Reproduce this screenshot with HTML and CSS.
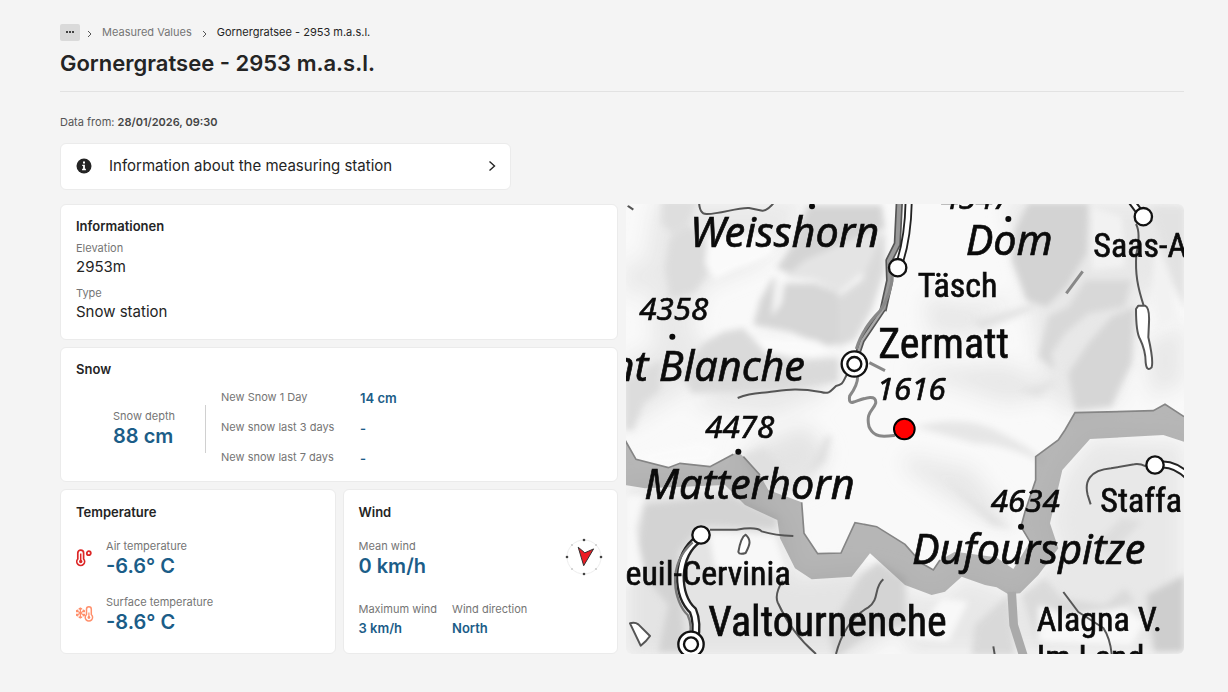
FILE: index.html
```html
<!DOCTYPE html>
<html lang="en">
<head>
<meta charset="utf-8">
<meta name="viewport" content="width=device-width, initial-scale=1">
<title>Gornergratsee - 2953 m.a.s.l.</title>
<link rel="stylesheet" href="styles.css">
</head>
<body>
<main class="page">
  <header class="page-header">
    <nav class="breadcrumb" aria-label="Breadcrumb">
      <button class="crumb-more" type="button" aria-label="Show more levels">
        <svg width="10" height="4" viewBox="0 0 10 4"><g fill="#444"><rect x="1" y="1" width="2" height="2"/><rect x="4" y="1" width="2" height="2"/><rect x="7" y="1" width="2" height="2"/></g></svg>
      </button>
      <svg class="crumb-sep" width="5" height="8" viewBox="0 0 5 8"><path d="M1 1l3 3-3 3" fill="none" stroke="#555"/></svg>
      <a class="crumb" href="#">Measured Values</a>
      <svg class="crumb-sep" width="5" height="8" viewBox="0 0 5 8"><path d="M1 1l3 3-3 3" fill="none" stroke="#555"/></svg>
      <span class="crumb current" aria-current="page">Gornergratsee - 2953 m.a.s.l.</span>
    </nav>
    <h1 class="page-title">Gornergratsee - 2953 m.a.s.l.</h1>
  </header>

  <p class="data-from">Data from: <strong>28/01/2026, 09:30</strong></p>

  <button class="info-button" type="button">
    <svg width="16" height="16" viewBox="0 0 16 16"><circle cx="8" cy="8" r="7.5" fill="#242424"/><path d="M7 3.600h2v2H7zM6.200 6.800h2.700v4h1v1.400H6.100v-1.400h1V8.100h-.9z" fill="#fff"/></svg>
    <span class="info-label">Information about the measuring station</span>
    <svg width="8" height="12" viewBox="0 0 8 12"><path d="M1.500 1.500L6.500 6l-5 4.500" fill="none" stroke="#242424" stroke-width="1.400"/></svg>
  </button>

  <div class="layout">
    <div class="cards">
      <section class="card card-info">
        <h2 class="card-title">Informationen</h2>
        <dl class="facts">
          <dt class="label">Elevation</dt><dd class="fact">2953m</dd>
          <dt class="label">Type</dt><dd class="fact">Snow station</dd>
        </dl>
      </section>

      <section class="card card-snow">
        <h2 class="card-title">Snow</h2>
        <div class="snow">
          <div class="snow-depth">
            <span class="label">Snow depth</span>
            <span class="value-lg">88 cm</span>
          </div>
          <dl class="snow-new">
            <dt class="label">New Snow 1 Day</dt><dd class="value">14 cm</dd>
            <dt class="label">New snow last 3 days</dt><dd class="value">-</dd>
            <dt class="label">New snow last 7 days</dt><dd class="value">-</dd>
          </dl>
        </div>
      </section>

      <section class="card card-small">
        <h2 class="card-title">Temperature</h2>
        <div class="reading">
          <svg width="18" height="18" viewBox="0 0 18 18" fill="none" stroke="#dc2626"><path d="M1.800 4a2.900 2.900 0 0 1 5.800 0v6a3.900 3.900 0 1 1-5.800 0z" stroke-width="1.700"/><path d="M4.700 4.500v7" stroke-width="1.500"/><circle cx="4.700" cy="12.500" r="1.700" fill="#dc2626" stroke="none"/><circle cx="12.800" cy="4.200" r="2" stroke-width="1.800"/></svg>
          <div class="stack"><span class="label">Air temperature</span><span class="value-lg">-6.6° C</span></div>
        </div>
        <div class="reading">
          <svg width="18" height="18" viewBox="0 0 18 18" fill="none" stroke="#ff8f6b"><path d="M10.500 4.200a2.400 2.400 0 0 1 4.800 0v5.300a3.700 3.700 0 1 1-4.800 0z" stroke-width="1.500"/><path d="M12.900 7.500v5" stroke-width="1.200"/><circle cx="12.900" cy="12.500" r="1.400" fill="#ff8f6b" stroke="none"/><path d="M4.400 2.500v11M0 5.300l8.800 5.400M0 10.700l8.800-5.400M2.800 3.300l1.600 1.500L6 3.300M2.800 12.700l1.600-1.500L6 12.700M1.800 4.500v2.200H0M1.800 11.500V9.300H0M7.200 4.500v2.200H9M7.200 11.500V9.300H9" stroke-width="1.200"/></svg>
          <div class="stack"><span class="label">Surface temperature</span><span class="value-lg">-8.6° C</span></div>
        </div>
      </section>

      <section class="card card-small">
        <h2 class="card-title">Wind</h2>
        <div class="wind-main">
          <div class="stack"><span class="label">Mean wind</span><span class="value-lg">0 km/h</span></div>
          <svg class="compass" width="40" height="40" viewBox="0 0 40 40" role="img" aria-label="Wind direction north">
            <circle cx="20" cy="20" r="17" fill="none" stroke="#eee"/>
            <g fill="#ccc"><circle cx="8" cy="8" r="1.100"/><circle cx="32" cy="8" r="1.100"/><circle cx="8" cy="32" r="1.100"/><circle cx="32" cy="32" r="1.100"/></g>
            <g fill="#444"><circle cx="20" cy="3" r="1.300"/><circle cx="37" cy="20" r="1.300"/><circle cx="20" cy="37" r="1.300"/><circle cx="3" cy="20" r="1.300"/></g>
            <path d="M14.200 10.200l6.600 5.600 8.800-3.900-9.900 16.800z" fill="#ed1c24" stroke="#333"/>
          </svg>
        </div>
        <div class="wind-details">
          <div class="stack"><span class="label">Maximum wind</span><span class="value">3 km/h</span></div>
          <div class="stack"><span class="label">Wind direction</span><span class="value">North</span></div>
        </div>
      </section>
    </div>

    <div class="map">
      <svg class="map-canvas" viewBox="0 0 1674 1350" preserveAspectRatio="xMidYMid slice" role="img" aria-label="Map of the station surroundings">
        <defs>
          <filter id="soft" x="-10%" y="-10%" width="120%" height="120%"><feGaussianBlur stdDeviation="10"/></filter>
          <filter id="haze" x="-10%" y="-10%" width="120%" height="120%"><feGaussianBlur stdDeviation="28"/></filter>
        </defs>
        <rect width="1674" height="1350" fill="#f9f9f9"/>
        <!-- relief shading -->
        <g filter="url(#haze)">
          <g transform="translate(-3 -12)" fill="#e9e9e9">
            <path d="M90 0h450l-60 120-90 80-150 60-40 130 60 60-60 110-210 130V480l100-40-30-260z"/>
            <path d="M420 420l230 60-60 110-150 60-240-30zM0 170l110 60-110 70z"/>
          </g>
          <g transform="translate(837 -12)" fill="#e8e8e8">
            <path d="M300 0h540v100l-40 140-90 60-70 300-160 40-80-160-30-200zM60 290l110 20 180-10-120 60-10 50-150-10zM720 430l117-60v180l-100 40zM0 510l300-20 200 90-200 30z"/>
          </g>
          <g transform="translate(-3 663)" fill="#e4e4e4">
            <path d="M0 180h360l120 110 30 160 210-20 120 30v140l-150 100H0zM350 80L540 0l70 80-60 110-150-10z"/>
          </g>
          <g transform="translate(837 663)" fill="#e8e8e8">
            <path d="M480 140l80-100 277 10v640H0V500l120 10 60-60 160 60 120-140-30-80zM0 90l200 40 140 180-120-30L0 130z"/>
          </g>
        </g>
        <g filter="url(#soft)">
          <g transform="translate(-3 -12)">
            <path fill="#dedede" d="M110 0h110l-30 70-45 35-35-35z"/>
            <path fill="#dcdcdc" d="M190 75l-55 40-15 90 15 90 75-20 35-50V130z"/>
            <path fill="#d4d4d4" d="M550 15h220l10 70-160 60-110 80-55-20 50-75 20-60z"/>
            <path fill="#e4e4e4" d="M620 145l150-50 5 110-70 20-65 55-70-40-90-10 60-50z"/>
            <path fill="#d6d6d6" d="M480 250h90l70 30 5 150-40 10-110-45-110-20 20-75 40-70 20 30z"/>
            <path fill="#dadada" d="M780 90v120l-40 120-50 90-50 20v-150l70-50z"/>
            <path fill="#dadada" d="M235 430l60-35 60-10 50 55 110 45 125-10v70l-160 25-280 10-30-60z"/>
            <path fill="#dcdcdc" d="M0 540l110-60-5 90-50 40-30 80H0z"/>
            <path fill="#f4f4f4" d="M450 235l30 15-10 60-30 40z"/>
            <path fill="#fafafa" d="M250 110l180-10 20 60-60 30-60 20-60 30-30-50z"/>
            <path fill="#fafafa" d="M390 410l180 10 60 30-60 20-150-10z"/>
          </g>
          <g transform="translate(837 -12)">
            <path fill="#d3d3d3" d="M370 10h180l-5 150-60 100-60 60-60-20-45-120 10-90z"/>
            <path fill="#d8d8d8" d="M430 350l60-30 50-80h140l-20 80-110 20-70 60-40 60 10 50-50-40z"/>
            <path fill="#d6d6d6" d="M490 520l60-90 70-80 70-30-10 170-40 80-20 50-110 10z"/>
            <path fill="#e2e2e2" d="M740 20h100v310l-40-90zM200 360l200-50-20 20-150 60zM340 570l120-30-60 50z"/>
            <path fill="#f2f2f2" d="M560 20l90 30 10 150-100 10zM750 120l50 120 20 120-60 30-20-100z"/>
            <path fill="#e6e6e6" d="M30 680q160-40 260 20 100 50 130 90-120-60-210-60z"/>
          </g>
          <g transform="translate(-3 663)">
            <path fill="#d3d3d3" d="M60 240l250-30 150 70-10 30-220-10-70 80 20 300h-80l30-140-100-120z"/>
            <path fill="#d4d4d4" d="M710 450l50-40 80 50v140l-100 20-110 80-20-80z"/>
            <path fill="#e0e0e0" d="M350 90l70-20 90 110-30 30-70-30zM540 150l60-110 20-10-20 80z"/>
            <path fill="#f8f8f8" d="M0 210h60l-30 100 30 140-60 40zM250 320l200 10 40 120-220-20z"/>
            <path fill="#fafafa" d="M20 90l200-40 60 20-30 40-160 10z"/>
          </g>
          <g transform="translate(837 663)">
            <path fill="#cecece" d="M725 510l112-60v230h-90z"/>
            <path fill="#dadada" d="M350 510l70-50 50 60 130 20 60-50 30 40-150 50-140 80z"/>
            <path fill="#d9d9d9" d="M210 600l100-90 20 180H200z"/>
            <path fill="#f8f8f8" d="M400 540l90 30 170-20 60 40-40 70-280-10zM20 640l90-120 80 10-60 120z"/>
            <path fill="#dddddd" d="M580 350l70-70 60 10-100 100z"/>
            <path fill="#e2e2e2" d="M120 160l200 150-60-10z"/>
          </g>
        </g>
        <!-- national border -->
        <path fill="#888" fill-opacity=".6" d="M-3 708L30 766l97 25 35-13 90 10 70-37 15-8 15 15 50 55 25 45 100 37 7 93 41 61 70-2 42-91 65 12 85 53 50 57 35 20 20-30 45-25 123 17 52 35 50-82-27-45 12-45 32-95v-70l68-50 20-30 30-52 235-6 35-19 57 37v75l-62-20-220 12-83 93-37 160 25 75-60 80-55 55-35 3-35-21-35-7-70-25-50 45-40 10-80-30-105-95-55 70-120 8-50-33-45-90-8-55-97-45-60-60-240 10-60-10z"/>
        <path fill="none" stroke="#858585" stroke-width="5" d="M-3 708L30 766l97 25 35-13 90 10 70-37M352 758l50 55M527 895l7 93 41 61 70-2 42-91 65 12 85 53 50 57 35 20 20-30M1212 1013l-27-45 12-45 32-95v-70l68-50 20-30 30-52 235-6 35-19 57 37"/>
        <path fill="none" stroke="#aaa" stroke-width="26" d="M1157 1163l6 100 30 95"/>
        <!-- roads, railways and lakes -->
        <g fill="none" stroke-linejoin="round">
          <g stroke="#555" stroke-width="6">
            <path d="M219-12q0 45 25 42c40 0 90-20 125-18l40 8q15 2 40-30M0 2l22 15M335 582c40-16 60-14 90-17 50-6 80-15 160-1 25 8 30-4 45-18 25-5 20-15 35-38"/>
            <path d="M1530 60q15 28 1 90c-4 60 4 100 22 155"/>
            <path d="M252 977h80q60-10 75 5 40 12 95 14M470 1130q-25 40-15 65 40 90 115 155M772 1126c-30 25-10 60-45 84-55 30-85 90-97 140M1560 787q-20-9-35-6l-70 12c-65 6-80 40-70 80l9 28M1312 1164l45 60 75 48q20 30 25 78M1102 1327l5 30"/>
          </g>
          <path stroke="#555" stroke-width="22" d="M820-5l-6 125-25 50 2 60-20 90"/>
          <path stroke="#999" stroke-width="12" d="M820-5l-6 125-25 50 2 60-20 90"/>
          <path stroke="#555" stroke-width="17" d="M772 315l-64 95-15 45"/>
          <path stroke="#aaa" stroke-width="7" d="M772 315l-64 95-15 45"/>
          <path stroke="#222" stroke-width="24" d="M848-5q-2 100-25 175"/>
          <path stroke="#fff" stroke-width="13" d="M848-5q-2 100-25 175"/>
          <path stroke="#888" stroke-width="9" d="M799 205q2 55-36 115-55 55-72 115M695 518q0 25-24 58-4 24 12 18c25-8 70-28 66 4-8 24-30 25-20 70 15 35 45 30 78 26M730 476l47 24M1321 268l49-66"/>
          <path stroke="#222" stroke-width="27" d="M218 1005q-50 35-55 110 0 70 38 105 15 35 5 90"/>
          <path stroke="#fff" stroke-width="13" d="M218 1005q-50 35-55 110 0 70 38 105 15 35 5 90"/>
          <path stroke="#777" stroke-width="7" d="M200 1015c-80 70-55 180-15 218q15 30 5 80"/>
          <path stroke="#222" stroke-width="24" d="M1515-10l30 40M1597 783q45-8 90 35"/>
          <path stroke="#fff" stroke-width="12" d="M1515-10l30 40M1597 783q45-8 90 35"/>
          <g fill="#fff" stroke="#555" stroke-width="6">
            <path d="M1537 305h20q14 5 12 50l-2 45q16 70 10 90-15 15-18-15 0-35-17-70-12-20-12-90zM337 1044q8-45 22-52c20 18 10 35 0 55-15 5-20 3-22-3zM12 1258q15-4 25 3l35 35q-10 15-28 29z"/>
          </g>
        </g>
        <!-- peaks and places -->
        <g fill="#0b0b0b">
          <circle cx="558" cy="7" r="9"/><circle cx="139" cy="398" r="9"/><circle cx="1147" cy="45" r="9"/><circle cx="337" cy="743" r="9"/><circle cx="1185" cy="968" r="9"/>
        </g>
        <g fill="#fff" stroke="#111" stroke-width="7">
          <circle cx="815" cy="191" r="26"/><circle cx="1552" cy="38" r="26"/><circle cx="225" cy="993" r="26"/><circle cx="1587" cy="783" r="26"/>
          <circle cx="685" cy="480" r="38"/><circle cx="685" cy="480" r="21"/><circle cx="195" cy="1321" r="38"/><circle cx="195" cy="1321" r="21"/>
        </g>
        <g class="map-peak">
          <text x="192" y="129">Weisshorn</text>
          <text x="1019" y="154">Dom</text>
          <text x="537" y="531" text-anchor="end">nt Blanche</text>
          <text x="55" y="886">Matterhorn</text>
          <text x="858" y="1081">Dufourspitze</text>
        </g>
        <g class="map-height">
          <text x="40" y="348">4358</text><text x="946" y="14">4547</text><text x="752" y="589">1616</text><text x="238" y="701">4478</text><text x="1094" y="923">4634</text>
        </g>
        <g class="map-town">
          <text x="875" y="280">Täsch</text><text x="1402" y="160">Saas-A</text><text x="494" y="1143" text-anchor="end">euil-Cervinia</text><text x="1423" y="923">Staffa</text><text x="1232" y="1280">Alagna V.</text><text x="1232" y="1395">Im Land</text>
        </g>
        <g class="map-city">
          <text x="757" y="461">Zermatt</text><text x="247" y="1296">Valtournenche</text>
        </g>
        <circle cx="835" cy="675" r="31" fill="#f00" stroke="#000" stroke-width="6"/>
      </svg>
    </div>
  </div>
</main>
</body>
</html>
```
FILE: styles.css
```css
* { box-sizing: border-box; }

body {
  margin: 0;
  background: #f4f4f4;
  color: #242424;
  font-family: Inter, "Liberation Sans", sans-serif;
  font-size: 15px;
}

h1, h2, p, dl, dd { margin: 0; }
button { font: inherit; color: inherit; cursor: pointer; }
svg { display: block; flex: none; }

.page { padding: 23px 44px 37px 60px; }

.page-header { border-bottom: 1px solid #e2e2e2; padding-bottom: 14px; }

.breadcrumb {
  display: flex;
  align-items: center;
  gap: 10px;
  height: 18px;
  font-size: 11px;
}
.crumb-more {
  display: flex;
  align-items: center;
  justify-content: center;
  width: 20px;
  height: 17px;
  margin-right: -3px;
  padding: 0;
  border: 0;
  border-radius: 2px;
  background: #dadada;
}
.crumb-sep { margin-top: 3px; }
.crumb { color: #757575; text-decoration: none; }
.crumb.current { color: #242424; }

.page-title {
  margin-top: 8px;
  font-size: 22px;
  line-height: 28px;
  font-weight: 600;
}

.data-from {
  margin-top: 22px;
  font-size: 11px;
  line-height: 16px;
  color: #555;
}
.data-from strong { font-weight: 600; color: #444; }

.info-button {
  display: flex;
  align-items: center;
  width: 100%;
  max-width: 451px;
  height: 47px;
  margin-top: 13px;
  padding: 0 14px 2px 15px;
  border: 1px solid #ebebeb;
  border-radius: 6px;
  background: #fff;
  text-align: left;
}
.info-label { flex: 1; margin-left: 17px; }

.layout {
  display: grid;
  grid-template-columns: 1fr 1fr;
  gap: 8px;
  margin-top: 14px;
}
.cards {
  display: grid;
  grid-template-columns: 1fr 1fr;
  gap: 7px;
}
.card {
  padding: 13px 15px 15px;
  border: 1px solid #ebebeb;
  border-radius: 6px;
  background: #fff;
}
.card-info, .card-snow { grid-column: 1 / -1; }
.card-small { padding-top: 14px; }
.card-title { font-size: 13px; line-height: 16px; font-weight: 600; }

.label { font-size: 11px; line-height: 16px; color: #757575; }
.value, .value-lg { color: #1b5d88; font-weight: 600; }
.value { font-size: 13px; line-height: 16px; }
.value-lg { font-size: 20px; line-height: 24px; }
.stack { display: flex; flex-direction: column; }

.facts { margin-top: 6px; }
.fact { line-height: 21px; margin-bottom: 8px; }
.fact:last-child { margin-bottom: 0; }

.snow { display: flex; align-items: center; margin-top: 12px; }
.snow-depth {
  display: flex;
  flex-direction: column;
  margin-top: 4px;
  padding: 3px 30px 5px 37px;
  border-right: 1px solid #d0d0d0;
}
.snow-new {
  display: grid;
  grid-template-columns: 123px auto;
  gap: 14px 16px;
  margin-left: 15px;
}
.snow-new .value { padding-top: 2px; line-height: 14px; }

.reading { display: flex; align-items: center; gap: 12px; margin-top: 16px; }
.card-title + .reading { margin-top: 18px; }

.wind-main { display: flex; justify-content: space-between; align-items: center; margin-top: 18px; }
.compass { margin: -2px -2px 0 0; }
.wind-details { display: flex; gap: 15px; margin-top: 23px; }
.wind-details .stack { gap: 3px; }

.map {
  display: flex;
  border-radius: 6px;
  overflow: hidden;
}
.map-canvas { flex: 1; width: 100%; height: 100%; }
.map-canvas text { fill: #0b0b0b; stroke: #0b0b0b; stroke-width: 2px; }
.map-peak { font: italic 124px "Noto Sans", "Open Sans", sans-serif; }
.map-height { font: italic 94px "Noto Sans", "Open Sans", sans-serif; }
.map-town { font: 102px "Roboto Condensed", "Noto Sans", sans-serif; }
.map-city { font: 126px "Roboto Condensed", "Noto Sans", sans-serif; }
```
